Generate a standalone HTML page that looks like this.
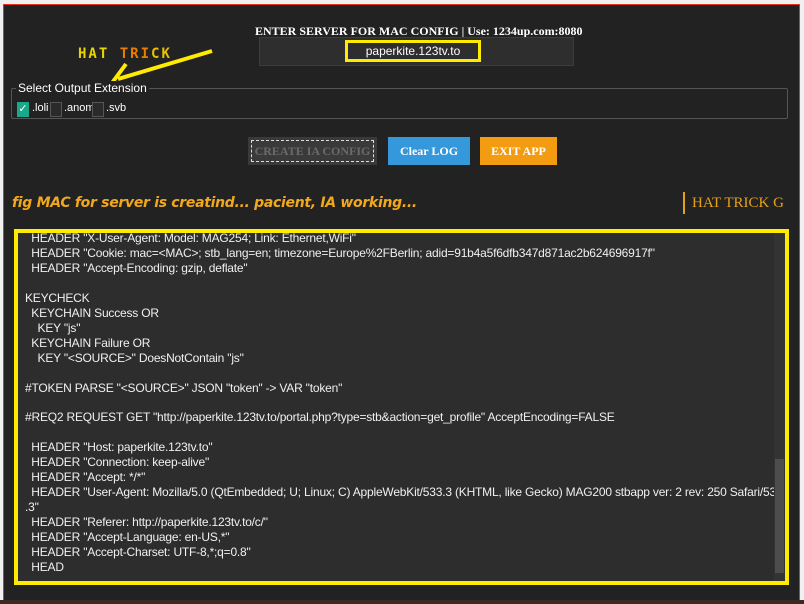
<!DOCTYPE html>
<html><head><style>
body{margin:0;width:804px;height:604px;overflow:hidden;background:#f0f0f0;position:relative;font-family:"Liberation Sans",sans-serif}
.win{position:absolute;left:3px;top:4px;width:795px;height:595px;border:1px solid #e8321e;background:#222}
.bot{position:absolute;left:0;top:600px;width:804px;height:4px;background:#3a2a22}
.abs{position:absolute}
.title{left:255px;top:24px;color:#fff;font:bold 12px "Liberation Serif",serif;white-space:nowrap}
.inp{left:259px;top:37px;width:313px;height:27px;background:#2e2e2e;border:1px solid #3c3c3c}
.inpbox{left:345px;top:40px;width:136px;height:22px;border:3px solid #ffeb00;box-sizing:border-box;color:#fff;font-size:12px;text-align:center;line-height:16px}
.hat{left:78px;top:46px;font:bold 14px "DejaVu Sans Mono",monospace;letter-spacing:2px}
fieldset{position:absolute;left:11px;top:81px;height:36px;margin:0;padding:0;border:1px solid #555;border-radius:2px;width:775px}
legend{color:#fff;font-size:12px;padding:0 2px;margin-left:4px;background:#222}
.cb{position:absolute;top:102px;width:10px;height:13px;border:1px solid #555;background:#2a2a2a}
.lbl{position:absolute;top:102px;color:#fff;font-size:11px}
.btn{position:absolute;top:137px;height:28px;text-align:center;font:bold 12px "Liberation Serif",serif;line-height:28px;color:#fff;white-space:nowrap}
.status{left:12px;top:195px;color:#f2a81d;font:italic bold 14px "DejaVu Sans",sans-serif;letter-spacing:-0.3px;white-space:nowrap}
.ht2{left:683px;top:192px;color:#e6a11b;font:15px "Liberation Serif",serif;border-left:2px solid #e6a11b;padding-left:7px;height:22px;line-height:22px;white-space:nowrap}
.log{left:14px;top:229px;width:767px;height:348px;border:4px solid #ffeb00;background:#2d2d2d;overflow:hidden}
.log pre{margin:0;position:absolute;left:7px;top:-2px;color:#f0f0f0;font:12px/14.95px "Liberation Sans",sans-serif;letter-spacing:-0.2px;white-space:pre}
.sb{position:absolute;right:0;top:0;width:11px;height:348px;background:#333}
.thumb{position:absolute;right:1px;top:226px;width:9px;height:114px;background:#4d4d4d}
</style></head><body>
<div class="win"></div>
<div class="bot"></div>
<div class="abs title">ENTER SERVER FOR MAC CONFIG | Use: 1234up.com:8080</div>
<div class="abs inp"></div>
<div class="abs inpbox">paperkite.123tv.to</div>
<div class="abs hat"><span style="color:#e8d400">HAT</span> <span style="color:#e87d00">TRI</span><span style="color:#e8c000">CK</span></div>
<svg class="abs" style="left:0;top:0" width="804" height="130"><path d="M212 51 L118 79" stroke="#ffeb00" stroke-width="4" fill="none"/><path d="M126 64 L112 83 L129 91" stroke="#ffeb00" stroke-width="4" fill="none"/></svg>
<fieldset><legend>Select Output Extension</legend></fieldset>
<div class="cb" style="left:17px;background:#1aa88a;border-color:#1aa88a;color:#fff;font-size:11px;line-height:13px;text-align:center">✓</div>
<div class="lbl" style="left:32px">.loli</div>
<div class="cb" style="left:50px"></div>
<div class="lbl" style="left:64px">.anom</div>
<div class="cb" style="left:92px"></div>
<div class="lbl" style="left:106px">.svb</div>
<div class="btn" style="left:248px;width:129px;background:#3a3a3a;color:#6a6a6a;outline:1px dashed #ddd;outline-offset:-4px">CREATE IA CONFIG</div>
<div class="btn" style="left:388px;width:82px;background:#3498db">Clear LOG</div>
<div class="btn" style="left:480px;width:77px;background:#f39c12">EXIT APP</div>
<div class="abs status">fig MAC for server is creatind... pacient, IA working...</div>
<div class="abs ht2">HAT TRICK G</div>
<div class="abs log"><pre>  HEADER "X-User-Agent: Model: MAG254; Link: Ethernet,WiFi"
  HEADER "Cookie: mac=&lt;MAC&gt;; stb_lang=en; timezone=Europe%2FBerlin; adid=91b4a5f6dfb347d871ac2b624696917f"
  HEADER "Accept-Encoding: gzip, deflate"

KEYCHECK
  KEYCHAIN Success OR
    KEY "js"
  KEYCHAIN Failure OR
    KEY "&lt;SOURCE&gt;" DoesNotContain "js"

#TOKEN PARSE "&lt;SOURCE&gt;" JSON "token" -&gt; VAR "token"

#REQ2 REQUEST GET "http://paperkite.123tv.to/portal.php?type=stb&amp;action=get_profile" AcceptEncoding=FALSE

  HEADER "Host: paperkite.123tv.to"
  HEADER "Connection: keep-alive"
  HEADER "Accept: */*"
  HEADER "User-Agent: Mozilla/5.0 (QtEmbedded; U; Linux; C) AppleWebKit/533.3 (KHTML, like Gecko) MAG200 stbapp ver: 2 rev: 250 Safari/53
.3"
  HEADER "Referer: http://paperkite.123tv.to/c/"
  HEADER "Accept-Language: en-US,*"
  HEADER "Accept-Charset: UTF-8,*;q=0.8"
  HEAD</pre><div class="sb"><div class="thumb"></div></div></div>
</body></html>
